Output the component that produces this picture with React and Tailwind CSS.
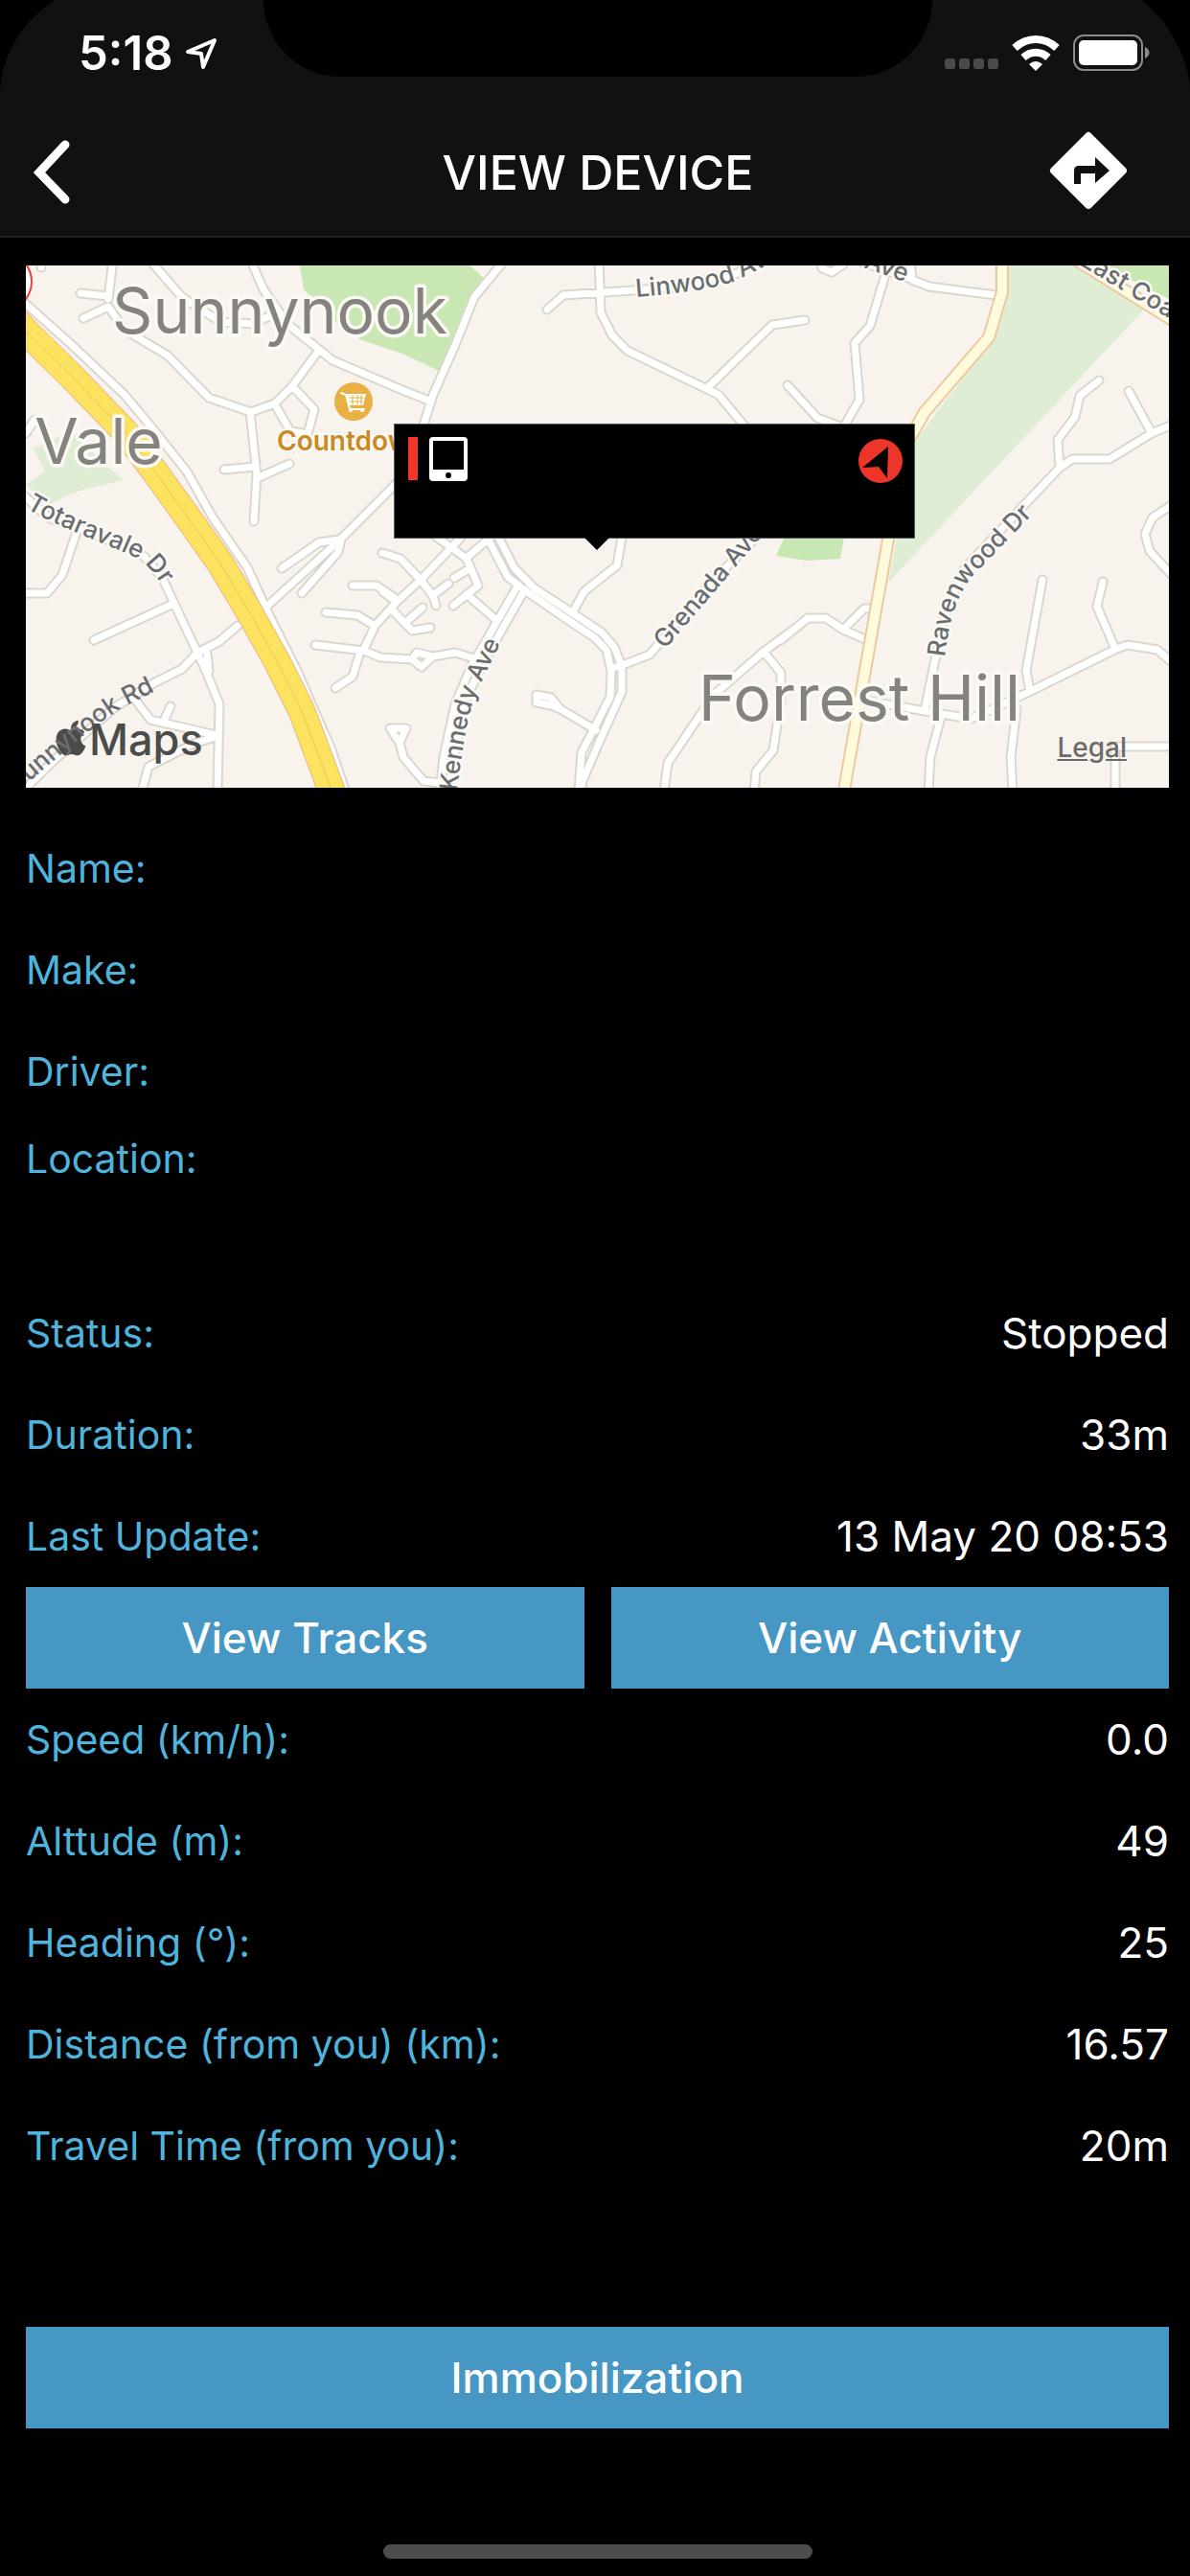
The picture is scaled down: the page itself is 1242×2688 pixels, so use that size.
import { FaApple } from "react-icons/fa";

const PARKS = [
  ["M313 277L317 302L330 316L355 340L378 355L420 369L460 388L505 290L490 277Z", "#c8e7b2"],
  ["M810 580L819 560H881L877 583L842 585Z", "#c8e7b2"],
  ["M1150 277H1220V312L1196 300Z", "#c8e7b2"],
  ["M1052 277H1128L1195 322L927 608L940 540L955 460L1035 355L1052 300Z", "#dfedd5"],
  ["M35 468L75 450L95 470L110 485L129 501L80 513L52 526L27 506L47 492Z", "#dfedd5"],
];

const STREETS = [
  "M27 317L75 360L130 412L160 448L195 492L222 540L258 592L280 640L310 700L345 780L360 824",
  "M118 270L113 312M84 306L113 309M87 332L113 320L130 344L175 371L218 415L262 430L287 421L305 403L333 365",
  "M155 270L190 310L230 336L265 338L290 325",
  "M261 270L275 302L300 338L347 376L420 407L450 419",
  "M528 270L495 310L475 360L452 412L440 450",
  "M305 403L328 427L321 453L303 450L288 424",
  "M261 430L268 495L265 544M234 490L266 487M268 499L302 484",
  "M43 270V279",
  "M415 503L354 564L276 635M294 593L333 566L354 563M315 619L353 576L356 563",
  "M248 653L228 670L206 681L190 698L160 713L120 738L60 790L25 824",
  "M27 452L36 438",
  "M26 518L50 540L100 558L150 580L170 604L182 630L206 681L214 698L229 735L227 826",
  "M206 681L190 698M216 682L218 700",
  "M98 668L181 630M80 555L65 600L49 619H24",
  "M141 730L157 751L225 767M172 750L178 737M227 768L200 777L155 800L148 826",
  "M399 577L418 583L439 605L452 622L455 632",
  "M368 611H393L412 624M340 639L373 642L391 653",
  "M329 673L380 679L397 686L430 688L440 696L452 685L435 681L430 688M452 685L475 681L495 687",
  "M350 718L368 706L376 680",
  "M380 677L392 652L415 627L440 604L480 562",
  "M408 635L430 658L449 655M425 648L441 634M400 618L414 628",
  "M455 560L472 572L487 583L499 611L473 632M474 603L489 594M452 621L468 609",
  "M487 582L515 558M487 620L518 647",
  "M520 560L537 593L558 614L598 640L628 660L641 675L649 695V722L625 775L608 815L606 826",
  "M508 560L530 602L545 614L590 645L620 665L633 678L638 700L637 727L615 770L607 785L604 826",
  "M541 610L515 655L492 695L475 735L463 790L459 826M548 615L525 655L500 700L484 735L474 790L468 826",
  "M622 762L585 740L575 728L560 725V733L575 736L585 740",
  "M407 760H424L417 775ZM417 775L421 790L442 815L460 817",
  "M650 555L644 590L610 617L597 640",
  "M640 697L655 692L678 683L740 610L800 550",
  "M571 323L588 308L660 303L700 300L770 285L790 270",
  "M625 270L627 326L639 350L655 366L738 406L750 412L780 448M738 405L806 339L840 334",
  "M923 290L908 340L892 358L897 417L878 450M822 402L853 436L880 446",
  "M856 270L858 280L868 284L880 276M890 270L948 290M950 270L952 292L970 299L1040 308",
  "M1147 397L1127 413L1122 435L1104 459L1106 488M1178 408L1202 452",
  "M1224 443L1202 452L1158 479H1119L1106 488L1066 530L1005 595L985 645L965 741",
  "M1224 526L1203 540L1195 557L1200 575L1222 599",
  "M815 668L843 645H862L880 657L905 668M880 657L902 635H912",
  "M835 652L797 680L745 725L697 796L693 826M797 680L815 702V730L807 783L789 805L787 826",
  "M905 731L965 742L1013 750L1040 738L1076 721L1165 677L1177 673L1208 678L1224 692",
  "M1075 721L1071 700L1088 605M1164 677L1145 633L1151 607",
  "M982 748L971 790L969 826M1061 740L1055 790L1057 826M1164 779H1224M1164 779V826",
];

const STREET_LABELS = [
  ["totaravale", "M27 530C60 550 105 565 142 582C154 588 166 604 176 622", "Totaravale Dr"],
  ["sunnynook-rd", "M18 827C52 797 90 763 125 740L180 712", "Sunnynook Rd"],
  ["kennedy", "M477 826C482 785 487 750 496 725L530 655", "Kennedy Ave"],
  ["grenada", "M694 678L806 547", "Grenada Ave"],
  ["linwood", "M664 310C700 307 740 303 768 293L830 262", "Linwood Ave"],
  ["ave", "M901 279L972 304", "Ave"],
  ["east-coast", "M1126 276L1298 379", "East Coast Rd"],
  ["ravenwood", "M986 686C990 650 998 620 1018 598L1090 524", "Ravenwood Dr"],
];

function MapCanvas() {
  const streets = STREETS.join("");
  const highway = "M20 338L27 346L75 393L130 450L160 490L196 540L230 588L261 640L290 692L315 742L348 830";
  const arterial = "M1046 270V305L1032 352L965 430L948 460L927 563L880 830";
  const coast = "M1118 268L1230 338";
  return (
    <svg
      viewBox="27 277 1193 545"
      preserveAspectRatio="xMidYMid slice"
      className="block h-[545px] w-full bg-[#f8f4ed]"
      role="img"
      aria-label="Map of Sunnynook and Forrest Hill"
      fontFamily='Inter, "Liberation Sans", sans-serif'
    >
      {PARKS.map(([d, fill]) => (
        <path key={d} d={d} fill={fill} />
      ))}
      <g fill="none" strokeLinejoin="round" strokeLinecap="round">
        <path d={streets} stroke="#dcd7ce" strokeWidth="11" />
        <path d={streets} stroke="#fff" strokeWidth="7" />
        <path d={coast} stroke="#edc9a0" strokeWidth="14" />
        <path d={coast} stroke="#fdfbdc" strokeWidth="10" />
        <path d={arterial} stroke="#edc9a0" strokeWidth="14" />
        <path d={arterial} stroke="#fefbdc" strokeWidth="10" />
        <path d={highway} stroke="#eeb68c" strokeWidth="29" />
        <path d={highway} stroke="#fbe25f" strokeWidth="27" />
        <path d={highway} stroke="#efc35f" strokeWidth="1" />
        <path d="M24 272C36 285 36 302 24 316" stroke="#f03b38" strokeWidth="2" fill="#fff" />
      </g>
      <FaApple x="53" y="749" size={42} color="#4b4b4a" />
      <g fill="#6a6d70" stroke="#fbf9f4" strokeWidth="5" strokeLinejoin="round" fontSize="26" fontWeight="500">
        {STREET_LABELS.map(([id, d, label]) => (
          <g key={id}>
            <path id={id} d={d} fill="none" stroke="none" />
            <text paintOrder="stroke" stroke={id === "sunnynook-rd" ? "none" : undefined}>
              <textPath href={"#" + id}>{label}</textPath>
            </text>
          </g>
        ))}
      </g>
      <g fill="#86827e" stroke="#fbf9f4" strokeWidth="7" strokeLinejoin="round" paintOrder="stroke" fontSize="66">
        <text x="292" y="348" textAnchor="middle">Sunnynook</text>
        <text x="103" y="484" textAnchor="middle">Vale</text>
        <text x="897" y="752" textAnchor="middle">Forrest Hill</text>
      </g>
      <circle cx="369" cy="419" r="20" fill="#e9b044" />
      <path d="M356 410L361 412L365 427H380" fill="none" stroke="#fff" strokeWidth="2" strokeLinecap="round" />
      <path d="M361 411H382L379 423H364Z" fill="#fff" />
      <path d="M364 415H380M365 419H379M368 412V423M373 412V423M377 412V423" stroke="#e9b044" strokeWidth="1" />
      <circle cx="366" cy="428" r="2" fill="#fff" />
      <circle cx="378" cy="428" r="2" fill="#fff" />
      <text x="289" y="470" fontSize="28" fontWeight="600" fill="#c98a25" stroke="#fbf9f4" strokeWidth="4" paintOrder="stroke">
        Countdown
      </text>
      <text x="93" y="788" fontSize="45" fontWeight="500" fill="#4b4b4a">
        Maps
      </text>
    </svg>
  );
}

function Callout() {
  return (
    <div className="absolute left-1/2 top-[165px] -ml-[213px] flex h-[120px] w-[544px] items-start justify-between border border-[#555] bg-black pl-[14px] pr-3 pt-[13px]">
      <div className="flex items-start gap-3">
        <span className="h-[45px] w-[10px] bg-[#f5372a]" />
        <svg viewBox="0 0 40 46" className="h-[46px] w-10" aria-hidden="true">
          <path fillRule="evenodd" fill="#fff" d="M4 0H36Q40 0 40 4V42Q40 46 36 46H4Q0 46 0 42V4Q0 0 4 0ZM4 4V34H36V4Z" />
          <circle cx="20" cy="40" r="3" fill="#000" />
        </svg>
      </div>
      <svg viewBox="0 0 46 46" className="mt-[2px] h-[46px] w-[46px]" aria-hidden="true">
        <circle cx="23" cy="23" r="23" fill="#ee352a" />
        <path d="M31 8L4 30L21 29L30 41Z" fill="#000" />
      </svg>
      <svg viewBox="0 0 26 13" className="absolute left-[198px] top-full h-[13px] w-[26px]" aria-hidden="true">
        <path d="M0 0H26L13 13Z" fill="#000" />
      </svg>
    </div>
  );
}

function StatusBar() {
  return (
    <div className="relative flex h-[110px] items-start justify-between pl-[82px] pr-10 pt-9">
      <svg viewBox="0 0 60 96" className="absolute left-0 top-0 h-24 w-[60px]" aria-hidden="true">
        <path d="M0 0H58C26 20 2 54 0 96Z" />
      </svg>
      <svg viewBox="0 0 60 96" className="absolute right-0 top-0 h-24 w-[60px]" aria-hidden="true">
        <path d="M60 0H10C36 22 56 54 60 90Z" />
      </svg>
      <div className="absolute left-1/2 top-0 -ml-[346px] h-20 w-[698px] rounded-b-[80px] bg-black" />
      <div className="flex items-center gap-3">
        <span className="text-[49px] font-semibold leading-10">5:18</span>
        <svg viewBox="0 0 34 34" className="h-[34px] w-[34px]" aria-hidden="true">
          <path d="M31 3L3 15L17 17L19 31Z" fill="none" stroke="#fff" strokeWidth="4" strokeLinejoin="round" />
        </svg>
      </div>
      <div className="flex h-[38px] items-end">
        <div className="mb-[2px] mr-[14px] flex gap-1">
          <span className="h-[11px] w-[11px] rounded-[3px] bg-[#4a4a4a]" />
          <span className="h-[11px] w-[11px] rounded-[3px] bg-[#4a4a4a]" />
          <span className="h-[11px] w-[11px] rounded-[3px] bg-[#4a4a4a]" />
          <span className="h-[11px] w-[11px] rounded-[3px] bg-[#4a4a4a]" />
        </div>
        <svg viewBox="0 0 50 37" className="mr-[14px] h-[37px] w-[50px]" aria-hidden="true">
          <g fill="none" stroke="#fff" strokeWidth="8">
            <path d="M3 13C16 1 34 1 47 13" />
            <path d="M12 23C20 16 30 16 38 23" />
          </g>
          <path d="M18 30Q25 24 32 30L25 37Z" fill="#fff" />
        </svg>
        <svg viewBox="0 0 82 38" className="h-[38px] w-[82px]" aria-hidden="true">
          <rect x="1" y="1" width="71" height="36" rx="10" fill="none" stroke="#8b8b8b" strokeWidth="2" />
          <rect x="6" y="6" width="61" height="26" rx="5" fill="#fff" />
          <path d="M75 13C81 16 81 22 75 25Z" fill="#8b8b8b" />
        </svg>
      </div>
    </div>
  );
}

function NavBar() {
  return (
    <div className="grid h-[136px] grid-cols-[1fr_auto_1fr] items-center pl-8 pr-[26px]">
      <button type="button" aria-label="Back" className="h-[72px] w-[88px]">
        <svg viewBox="0 0 48 72" className="h-[72px] w-12" aria-hidden="true">
          <path d="M36 9L9 38L36 66" fill="none" stroke="#fff" strokeWidth="9" strokeLinecap="round" strokeLinejoin="miter" />
        </svg>
      </button>
      <h1 className="pt-1 text-[50px] font-medium leading-[60px]">VIEW DEVICE</h1>
      <button type="button" aria-label="Directions" className="mr-[38px] h-[84px] w-[84px] justify-self-end">
        <svg viewBox="0 0 84 84" className="h-[84px] w-[84px]" aria-hidden="true">
          <path d="M42 6L78 42L42 78L6 42Z" fill="#fff" stroke="#fff" strokeWidth="8" strokeLinejoin="round" />
          <path d="M27 56V42Q27 37 32 37H49V28L64 42L49 55V45H34V56Z" fill="#111" />
        </svg>
      </button>
    </div>
  );
}

function Row({ label, value, tall }) {
  return (
    <div
      className={
        tall
          ? "flex h-[167px] items-start justify-between pt-[13px]"
          : "flex h-[106px] items-center justify-between"
      }
    >
      <dt className="text-[41px] leading-[50px] text-[#4fb3dc]">{label}</dt>
      <dd className="text-[44px] leading-[52px]">{value}</dd>
    </div>
  );
}

function ActionButton({ children }) {
  return (
    <button type="button" className="h-[106px] flex-1 bg-[#4697c4] text-[44px] font-medium leading-[52px]">
      {children}
    </button>
  );
}

export default function App() {
  return (
    <div className="flex min-h-screen flex-col bg-black font-['Inter','Liberation_Sans',sans-serif] text-white">
      <header className="border-b-2 border-[#222] bg-[#111]">
        <StatusBar />
        <NavBar />
      </header>
      <main className="flex flex-col pl-[27px] pr-[22px] pt-[29px]">
        <section className="relative mb-[31px] overflow-hidden">
          <MapCanvas />
          <Callout />
          <a href="#legal" className="absolute bottom-[26px] right-[44px] text-[28px] font-medium leading-8 text-[#6c6b69] underline">
            Legal
          </a>
        </section>
        <dl>
          <Row label="Name:" />
          <Row label="Make:" />
          <Row label="Driver:" />
          <Row label="Location:" tall />
          <Row label="Status:" value="Stopped" />
          <Row label="Duration:" value="33m" />
          <Row label="Last Update:" value="13 May 20 08:53" />
        </dl>
        <div className="flex gap-7">
          <ActionButton>View Tracks</ActionButton>
          <ActionButton>View Activity</ActionButton>
        </div>
        <dl>
          <Row label="Speed (km/h):" value="0.0" />
          <Row label="Alttude (m):" value="49" />
          <Row label="Heading (°):" value="25" />
          <Row label="Distance (from you) (km):" value="16.57" />
          <Row label="Travel Time (from you):" value="20m" />
        </dl>
        <div className="mt-[136px] flex">
          <ActionButton>Immobilization</ActionButton>
        </div>
      </main>
      <footer className="mb-[18px] mt-auto flex justify-center pl-[27px] pr-[22px]">
        <div className="h-[15px] w-[448px] rounded-full bg-[#4d4d4d]" />
      </footer>
    </div>
  );
}
